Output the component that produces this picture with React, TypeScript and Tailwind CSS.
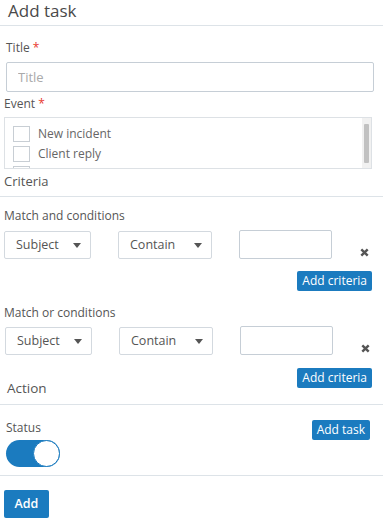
import { useState } from "react";

const blue = "bg-[#1b7bbf]";

function Caret() {
  return (
    <svg width="8" height="5" viewBox="0 0 8 5" className="shrink-0">
      <path d="M0 0h8L4 5z" fill="#555" />
    </svg>
  );
}

function Remove() {
  return (
    <svg width="9" height="9" viewBox="0 0 9 9" className="shrink-0">
      <path d="M1.3 1.3l6.4 6.4M7.7 1.3L1.3 7.7" stroke="#555" strokeWidth="2.4" />
    </svg>
  );
}

function SelectBox({ label, width }: { label: string; width: string }) {
  return (
    <div
      className={`flex h-[28px] ${width} items-center justify-between rounded-[2px] border border-[#d3d9df] pr-[9px] pl-[11px] text-[12.5px] text-[#555]`}
    >
      <span>{label}</span>
      <Caret />
    </div>
  );
}

function CriteriaRow({ offset }: { offset: string }) {
  return (
    <div className={`flex items-end ${offset}`}>
      <SelectBox label="Subject" width="w-[87px]" />
      <div className="ml-[27px]">
        <SelectBox label="Contain" width="w-[94px]" />
      </div>
      <div className="ml-[27px] h-[29px] w-[93px] self-start rounded-[2px] border border-[#c6ced6]" />
      <div className="mb-[2px] ml-[28px]">
        <Remove />
      </div>
    </div>
  );
}

function SmallButton({ children }: { children: string }) {
  return (
    <button
      className={`${blue} h-[20px] rounded-[2px] px-[5px] text-[12px] leading-[20px] text-white`}
    >
      {children}
    </button>
  );
}

function Check({ label }: { label: string }) {
  return (
    <div className="flex h-[20px] shrink-0 items-start gap-[8px]">
      <div className="h-[16px] w-[17px] shrink-0 border border-[#c8ced4] bg-white" />
      <div className="text-[12px] leading-[15px] text-[#666]">{label}</div>
    </div>
  );
}

export default function App() {
  const [on, setOn] = useState(true);

  return (
    <div className="h-[523px] w-[383px] overflow-hidden bg-white font-['Open_Sans',sans-serif] text-[#555]">
      <div className="h-[26px] border-b border-[#dde3e8] pl-[8px] text-[17px] leading-[22px] text-[#4a4a4a]">
        Add task
      </div>

      <div className="border-b border-[#dde3e8] px-[4px] pb-[7px]">
        <div className="mt-[14px] ml-[2px] text-[12px] leading-[16px]">
          Title <span className="text-[#e8372f]">*</span>
        </div>
        <input
          placeholder="Title"
          className="mt-[6px] ml-[2px] h-[30px] w-[368px] rounded-[2px] border border-[#c6ced6] px-[11px] text-[13px] outline-none placeholder:text-[#aaa]"
        />
        <div className="mt-[4px] text-[12px] leading-[16px]">
          Event <span className="text-[#e8372f]">*</span>
        </div>
        <div className="mt-[5px] flex h-[52px] w-[368px] overflow-hidden border border-[#dde1e5]">
          <div className="flex flex-1 flex-col pt-[8px] pl-[8px]">
            <Check label="New incident" />
            <Check label="Client reply" />
            <div className="h-[16px] w-[17px] shrink-0 border border-[#c8ced4]" />
          </div>
          <div className="flex w-[9px] justify-center bg-[#f1f1f1] pt-[6px]">
            <div className="h-[39px] w-[5px] rounded-[1px] bg-[#c1c1c1]" />
          </div>
        </div>
        <div className="mt-[4px] text-[13px] leading-[16px]">Criteria</div>
      </div>

      <div className="border-b border-[#dde3e8] px-[4px] pb-[8px]">
        <div className="mt-[11px] text-[12px] leading-[16px]">Match and conditions</div>
        <div className="mt-[6px]">
          <CriteriaRow offset="" />
        </div>
        <div className="mt-[12px] flex justify-end pr-[7px]">
          <SmallButton>Add criteria</SmallButton>
        </div>
        <div className="mt-[14px] text-[12px] leading-[16px]">Match or conditions</div>
        <div className="mt-[5px]">
          <CriteriaRow offset="ml-[1px]" />
        </div>
        <div className="mt-[13px] flex items-start justify-between pr-[7px]">
          <div className="mt-[12px] ml-[3px] text-[13.5px] leading-[16px]">Action</div>
          <SmallButton>Add criteria</SmallButton>
        </div>
      </div>

      <div className="flex justify-between border-b border-[#dde3e8] pb-[8px] pl-[6px]">
        <div className="flex flex-col">
          <div className="mt-[15px] text-[12px] leading-[16px]">Status</div>
          <button
            onClick={() => setOn(!on)}
            className={`mt-[4px] flex h-[27px] w-[54px] rounded-full ${on ? "justify-end bg-[#1b7bbf]" : "justify-start bg-[#ccc]"}`}
          >
            <span className="h-[27px] w-[27px] rounded-full border border-[#1b7bbf] bg-white" />
          </button>
        </div>
        <div className="mt-[11px] mr-[13px]">
          <SmallButton>Add task</SmallButton>
        </div>
      </div>

      <div className="px-[4px] pt-[14px]">
        <button
          className={`${blue} h-[28px] w-[45px] rounded-[2px] text-[12.5px] font-semibold text-white`}
        >
          Add
        </button>
      </div>
    </div>
  );
}
